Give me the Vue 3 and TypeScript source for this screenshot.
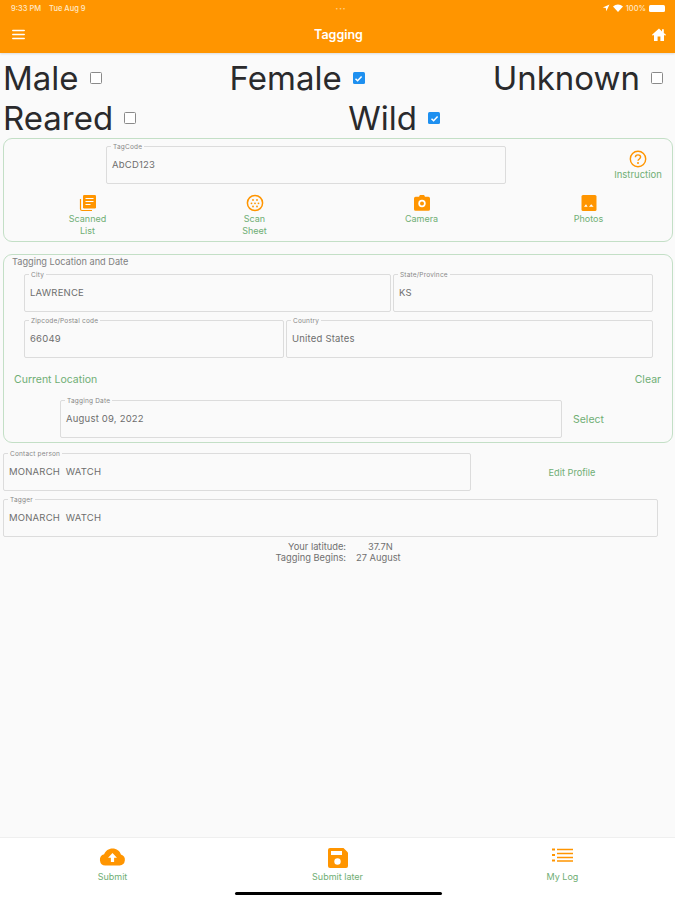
<template>
  <div class="page">
    <header class="header">
      <div class="status">
        <span class="clock">9:33 PM&nbsp;&nbsp;&nbsp; Tue Aug 9</span>
        <span class="dots">•••</span>
        <span class="sysicons">
          <svg width="8" height="8" viewBox="0 0 8 8"><path d="M7.5.5 .8 3.6l3 .4.5 3.3z" fill="#fff" /></svg>
          <svg width="10" height="8" viewBox="0 0 10 8"><path d="M0 2.6C2.8-.2 7.2-.2 10 2.6L5 8z" fill="#fff" /></svg>
          <span>100%</span>
          <span class="battery"></span>
        </span>
      </div>
      <div class="navbar">
        <svg class="menu" width="13" height="11" viewBox="0 0 13 11">
          <path d="M.8 1.500h11.400M.8 5.500h11.400M.8 9.500h11.400" stroke="#fff" stroke-width="1.500" stroke-linecap="round" />
        </svg>
        <span class="title">Tagging</span>
        <svg class="home" width="14" height="13" viewBox="0 0 14 13">
          <path d="M7 .5 0 6.800l.9 1L2 6.800V13h3.600V8.600h2.800V13H12V6.800l1.100 1 .9-1L11.800 5V1.300h-1.800v2.100z" fill="#fff" />
        </svg>
      </div>
    </header>

    <main class="content">
      <div class="choices">
        <div v-for="c in firstRow" :key="c.name" class="choice">
          {{ c.name }}
          <span class="box" :class="{ on: c.on }"><svg v-if="c.on" width="9" height="9" viewBox="0 0 9 9"><path d="M1.500 4.700 3.600 6.700 7.600 2.400" fill="none" stroke="#fff" stroke-width="1.500" /></svg></span>
        </div>
      </div>
      <div class="choices second">
        <div v-for="c in secondRow" :key="c.name" class="choice">
          {{ c.name }}
          <span class="box" :class="{ on: c.on }"><svg v-if="c.on" width="9" height="9" viewBox="0 0 9 9"><path d="M1.500 4.700 3.600 6.700 7.600 2.400" fill="none" stroke="#fff" stroke-width="1.500" /></svg></span>
        </div>
      </div>

      <section class="card scan-card">
        <div class="tag-row">
          <div class="field tag-field"><label>TagCode</label><span>AbCD123</span></div>
          <div class="tool instruction">
            <svg width="18" height="18" viewBox="0 0 18 18">
              <circle cx="9" cy="9" r="7.700" fill="none" stroke="#ff9500" stroke-width="1.400" />
              <path d="M6.400 7.200C6.400 5.700 7.600 4.900 9 4.900s2.600.9 2.600 2.200c0 1.800-2.600 1.900-2.600 3.700" fill="none" stroke="#ff9500" stroke-width="1.400" />
              <circle cx="9" cy="13" r="1" fill="#ff9500" />
            </svg>
            <span>Instruction</span>
          </div>
        </div>
        <div class="tools">
          <div class="tool">
            <svg width="18" height="18" viewBox="0 0 18 18">
              <path d="M1.500 5v10a1.500 1.500 0 0 0 1.500 1.500h10" fill="none" stroke="#ff9500" stroke-width="1.200" />
              <rect x="4" y="1" width="13" height="13.500" rx="1.200" fill="#ff9500" />
              <path d="M6.500 4.500h8M6.500 7.500h8M6.500 10.500h5" stroke="#fff" stroke-width="1.200" />
            </svg>
            <span>Scanned<br />List</span>
          </div>
          <div class="tool">
            <svg width="18" height="18" viewBox="0 0 18 18">
              <circle cx="9" cy="9" r="7.600" fill="none" stroke="#ff9500" stroke-width="1.500" />
              <g fill="#ff9500">
                <circle cx="7" cy="6" r=".9" /><circle cx="11" cy="6" r=".9" />
                <circle cx="5.500" cy="9.300" r=".9" /><circle cx="9" cy="9.300" r=".9" /><circle cx="12.500" cy="9.300" r=".9" />
                <circle cx="7" cy="12.500" r=".9" /><circle cx="11" cy="12.500" r=".9" />
              </g>
            </svg>
            <span>Scan<br />Sheet</span>
          </div>
          <div class="tool">
            <svg width="18" height="18" viewBox="0 0 18 18">
              <path d="M6 2.800 6.900 1h4.200l.9 1.800h3.400A1.600 1.600 0 0 1 17 4.400v10.800a1.600 1.600 0 0 1-1.600 1.600H2.600A1.600 1.600 0 0 1 1 15.200V4.400a1.600 1.600 0 0 1 1.600-1.600z" fill="#ff9500" />
              <circle cx="9" cy="9.500" r="3.700" fill="#fff" />
              <circle cx="9" cy="9.500" r="2" fill="#ff9500" />
            </svg>
            <span>Camera</span>
          </div>
          <div class="tool">
            <svg width="18" height="18" viewBox="0 0 18 18">
              <rect x="1.500" y="1" width="15" height="16" rx="1.500" fill="#ff9500" />
              <path d="M4 12.800 6 10.300l1.600 2.500zM9 12.800l2.200-2.500 2.400 2.500z" fill="#fff" />
            </svg>
            <span>Photos</span>
          </div>
        </div>
      </section>

      <section class="card location-card">
        <h2>Tagging Location and Date</h2>
        <div class="field-row">
          <div class="field city"><label>City</label><span>LAWRENCE</span></div>
          <div class="field state"><label>State/Province</label><span>KS</span></div>
        </div>
        <div class="field-row">
          <div class="field zip"><label>Zipcode/Postal code</label><span>66049</span></div>
          <div class="field country"><label>Country</label><span>United States</span></div>
        </div>
        <div class="location-links">
          <span>Current Location</span>
          <span>Clear</span>
        </div>
        <div class="date-row">
          <div class="field date"><label>Tagging Date</label><span>August 09, 2022</span></div>
          <span class="select">Select</span>
        </div>
      </section>

      <div class="contact-row">
        <div class="field contact"><label>Contact person</label><span>MONARCH&nbsp; WATCH</span></div>
        <span class="edit">Edit Profile</span>
      </div>
      <div class="field tagger"><label>Tagger</label><span>MONARCH&nbsp; WATCH</span></div>

      <div class="info">
        <div><span class="info-key">Your latitude:</span><span class="info-lat">37.7N</span></div>
        <div><span class="info-key">Tagging Begins:</span><span class="info-begin">27 August</span></div>
      </div>
    </main>

    <footer class="footer">
      <div class="tab">
        <svg width="27" height="18" viewBox="0 0 28 19">
          <path d="M6.500 18.500a6 6 0 0 1-1.300-11.800C6.500 2.800 10 .5 14 .5c4.300 0 7.800 2.500 8.900 6.300A6 6 0 0 1 21.500 18.500z" fill="#ff9500" />
          <path d="M14 5.200 9.300 10.400h3v4.400h3.400v-4.400h3z" fill="#fff" />
        </svg>
        <span>Submit</span>
      </div>
      <div class="tab">
        <svg width="20" height="20" viewBox="0 0 20 20">
          <path d="M2 0h13.500L20 4.500V18a2 2 0 0 1-2 2H2a2 2 0 0 1-2-2V2a2 2 0 0 1 2-2z" fill="#ff9500" />
          <rect x="3" y="3" width="11" height="4" fill="#fff" />
          <circle cx="9.500" cy="13.500" r="3.200" fill="#fff" />
        </svg>
        <span>Submit later</span>
      </div>
      <div class="tab">
        <svg width="21" height="14" viewBox="0 0 21 14">
          <path d="M5 1.500h16M5 5.500h16M5 9.500h16M5 13h16" stroke="#ff9500" stroke-width="1.500" />
          <path d="M0 1.500h3M0 7h3M0 12.500h3" stroke="#ff9500" stroke-width="1.800" />
        </svg>
        <span>My Log</span>
      </div>
      <div class="home-bar"></div>
    </footer>
  </div>
</template>

<script setup lang="ts">
interface Choice {
  name: string
  on: boolean
}

const firstRow: Choice[] = [
  { name: 'Male', on: false },
  { name: 'Female', on: true },
  { name: 'Unknown', on: false },
]

const secondRow: Choice[] = [
  { name: 'Reared', on: false },
  { name: 'Wild', on: true },
]
</script>

<style scoped>
.page {
  width: 675px;
  height: 900px;
  display: flex;
  flex-direction: column;
  overflow: hidden;
  background: #fafafa;
  font-family: Inter, "Liberation Sans", sans-serif;
}

.header {
  height: 53px;
  flex: none;
  background: #ff9500;
  color: #fff;
  box-shadow: 0 1px 2px rgba(0, 0, 0, 0.12);
}

.status {
  height: 16px;
  padding: 0 4px 0 11px;
  display: flex;
  align-items: center;
  justify-content: space-between;
  font-size: 7.500px;
  font-weight: 500;
  color: #ffe9c9;
}

.clock {
  width: 220px;
}

.dots {
  font-size: 5px;
  letter-spacing: 1px;
  color: #ffcf8a;
}

.sysicons {
  width: 220px;
  padding-right: 6px;
  box-sizing: border-box;
  display: flex;
  align-items: center;
  justify-content: flex-end;
  gap: 3px;
}

.battery {
  width: 16px;
  height: 7px;
  border-radius: 1.500px;
  background: #fff;
}

.navbar {
  height: 37px;
  padding: 0 9px 0 12px;
  display: flex;
  align-items: center;
  justify-content: space-between;
}

.title {
  font-size: 12.500px;
  font-weight: 600;
}

.content {
  flex: 1;
  min-height: 0;
  padding: 5px 0 0;
}

.choices {
  height: 40px;
  padding: 0 12px 0 3px;
  display: flex;
  align-items: center;
  justify-content: space-between;
}

.choices.second {
  padding-right: 235px;
}

.choice {
  display: flex;
  align-items: center;
  gap: 11px;
  font-size: 33px;
  line-height: 40px;
  color: #2a2a2c;
}

.box {
  width: 12px;
  height: 12px;
  box-sizing: border-box;
  border: 1.500px solid #8a8a8a;
  border-radius: 1.500px;
  display: flex;
  align-items: center;
  justify-content: center;
  background: #fff;
}

.box.on {
  border: none;
  background: #1e90f0;
}

.card {
  width: 670px;
  box-sizing: border-box;
  margin-left: 3px;
  border: 1px solid #c3dfc6;
  border-radius: 9px;
}

.scan-card {
  height: 104px;
  padding-top: 7px;
}

.tag-row {
  height: 42px;
  display: flex;
  align-items: flex-start;
}

.field {
  position: relative;
  height: 38px;
  box-sizing: border-box;
  padding: 0 5px 2px;
  display: flex;
  align-items: center;
  flex: none;
  border: 1.500px solid #dcdcdc;
  border-radius: 2px;
  font-size: 9.500px;
  color: #6e6e6e;
  letter-spacing: 0.2px;
}

.field label {
  position: absolute;
  top: -3px;
  left: 4px;
  padding: 0 2px;
  background: #fafafa;
  font-size: 6.500px;
  line-height: 7px;
  color: #888;
}

.tag-field {
  width: 400px;
  margin-left: 102px;
}

.instruction {
  width: 56px;
  margin: 4px 0 0 104px;
  flex: none;
}

.instruction span {
  font-size: 9.500px;
}

.tools {
  display: grid;
  grid-template-columns: repeat(4, 167px);
  margin-top: 6px;
}

.tool {
  display: flex;
  flex-direction: column;
  align-items: center;
  font-size: 9px;
  line-height: 12px;
  color: #6fae74;
  text-align: center;
}

.tool svg {
  margin-bottom: 1px;
}

.location-card {
  height: 189px;
  margin-top: 12px;
}

.location-card h2 {
  margin: 0;
  padding: 1px 0 0 8px;
  height: 17px;
  box-sizing: border-box;
  font-size: 9.200px;
  line-height: 11px;
  font-weight: 400;
  color: #808080;
}

.field-row {
  display: flex;
  gap: 2px;
  margin: 2px 0 0 20px;
}

.field-row + .field-row {
  margin-top: 8px;
}

.city {
  width: 367px;
}

.state {
  width: 260px;
}

.zip {
  width: 260px;
}

.country {
  width: 367px;
}

.location-links {
  height: 19px;
  margin-top: 12px;
  padding: 0 11px 0 10px;
  display: flex;
  align-items: center;
  justify-content: space-between;
  font-size: 10.500px;
  color: #6fae74;
}

.date-row {
  display: flex;
  align-items: center;
  margin: 11px 0 0 56px;
}

.date {
  width: 502px;
}

.select {
  margin-left: 11px;
  font-size: 10.500px;
  color: #6fae74;
}

.contact-row {
  display: flex;
  align-items: center;
  margin: 10px 0 0 3px;
}

.contact {
  width: 468px;
}

.edit {
  width: 202px;
  text-align: center;
  font-size: 9.200px;
  color: #6fae74;
}

.tagger {
  width: 655px;
  margin: 8px 0 0 3px;
}

.info {
  margin-top: 4px;
  font-size: 9.300px;
  line-height: 11px;
  color: #707070;
}

.info div {
  display: flex;
}

.info-key {
  width: 346px;
  text-align: right;
}

.info-lat {
  margin-left: 22px;
}

.info-begin {
  margin-left: 10px;
}

.footer {
  position: relative;
  height: 62px;
  flex: none;
  display: grid;
  grid-template-columns: repeat(3, 225px);
  background: #fff;
  border-top: 1px solid #efefef;
}

.tab {
  height: 44px;
  padding-top: 10px;
  box-sizing: border-box;
  display: flex;
  flex-direction: column;
  align-items: center;
  justify-content: space-between;
  font-size: 9px;
  color: #6fae74;
}

.tab:last-of-type svg {
  margin-top: 3px;
}

.home-bar {
  position: absolute;
  left: 235px;
  bottom: 5px;
  width: 207px;
  height: 3px;
  border-radius: 2px;
  background: #000;
}
</style>
